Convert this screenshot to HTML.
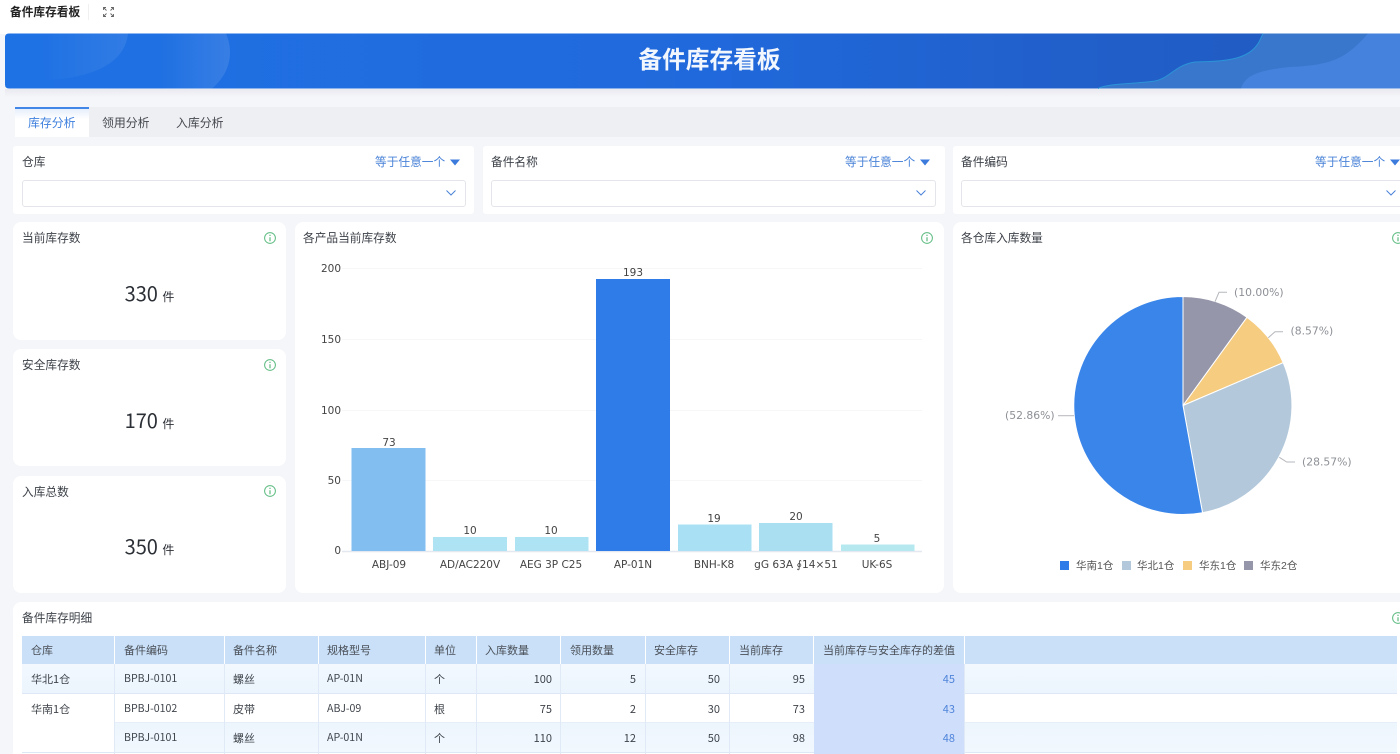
<!DOCTYPE html>
<html lang="zh">
<head>
<meta charset="utf-8">
<style>
*{box-sizing:border-box;margin:0;padding:0}
html,body{width:1400px;height:754px;overflow:hidden;background:#f5f6f9}
body{position:relative;font-family:"DejaVu Sans","Noto Sans CJK SC",sans-serif;font-size:11px;color:#333}
#p{position:absolute;left:0;top:0;width:1400px;height:754px;filter:blur(.35px)}
.a{position:absolute;white-space:nowrap}
.t{font-family:"Liberation Sans","Noto Sans CJK SC",sans-serif}
.card{position:absolute;background:#fff;border-radius:8px}
.ttl{position:absolute;font-family:"Liberation Sans","Noto Sans CJK SC",sans-serif;font-size:11.7px;line-height:16px;color:#3c4148;white-space:nowrap}
.sel{position:absolute;height:27px;background:#fff;border:1px solid #e3e5ea;border-radius:3px}
.eq{position:absolute;font-family:"Liberation Sans","Noto Sans CJK SC",sans-serif;font-size:11.7px;line-height:16px;color:#4a83d8;white-space:nowrap}
.val{position:absolute;left:0;width:273px;text-align:center;font-family:"Noto Sans CJK SC",sans-serif;font-size:20px;line-height:26px;color:#2b2f36;white-space:nowrap}
.val small{font-size:12px;margin-left:0}
.th,.td{position:absolute;font-family:"Noto Sans CJK SC",sans-serif;font-size:11px;white-space:nowrap;line-height:16px}
.th{color:#4a4f57;top:642px}
.td{color:#3f444b}
.c{font-size:10.6px}
.r{text-align:right}
</style>
</head>
<body>
<div id="p">
<!-- top bar -->
<div class="a" style="left:0;top:0;width:1400px;height:34px;background:#fff"></div>
<div class="a t" style="left:10px;top:5px;font-size:11.7px;line-height:16px;font-weight:bold;color:#222">备件库存看板</div>
<div class="a" style="left:88px;top:4px;width:1px;height:16px;background:#f0f0f0"></div>
<svg class="a" style="left:102px;top:6px" width="13" height="12" viewBox="0 0 13 12" fill="none" stroke="#666" stroke-width=".9">
<path d="M1.500 4V1.500H4M9 1.500H11.500V4M1.500 8V10.500H4M9 10.500H11.500V8M2 2L4.500 4.500M11 2L8.500 4.500M2 10L4.500 7.500M11 10L8.500 7.500"/>
</svg>

<!-- banner -->
<svg class="a" style="left:5px;top:33px" width="1395" height="56" viewBox="5 33 1395 56">
<defs>
<linearGradient id="bg" x1="0" x2="1" y1="0" y2="0">
<stop offset="0" stop-color="#1f72e4"/><stop offset=".5" stop-color="#2069dc"/><stop offset=".8" stop-color="#215ec8"/><stop offset="1" stop-color="#215ac0"/>
</linearGradient>
<linearGradient id="s1" x1="0" x2="1" y1="0" y2="0"><stop offset="0" stop-color="#fff" stop-opacity="0"/><stop offset="1" stop-color="#fff" stop-opacity=".08"/></linearGradient>
<linearGradient id="s2" x1="0" x2="1" y1="0" y2="0"><stop offset="0" stop-color="#fff" stop-opacity="0"/><stop offset="1" stop-color="#fff" stop-opacity=".11"/></linearGradient>
</defs>
<path d="M9 33.500H1400V88.500H9Q5 88.500 5 84.500V37.500Q5 33.500 9 33.500Z" fill="url(#bg)"/>
<path d="M40 33.500H128C125 62 95 78 45 80Z" fill="url(#s1)"/>
<path d="M160 33.500H226C235 55 228 75 212 88.500H160Z" fill="url(#s2)"/>
<path d="M1098 88.500C1110 83 1135 84 1155 81C1170 78 1175 65 1195 62C1220 61 1250 62 1260 40L1263 33.500H1400V88.500Z" fill="#3877cb"/>
<path d="M1098 88.500C1110 83 1135 84 1155 81C1170 78 1175 65 1195 62C1220 61 1250 62 1260 40L1263 33.500" fill="none" stroke="#2b94d8" stroke-width="1"/>
<path d="M1241 88.500C1245 75 1260 70 1290 67C1330 65 1345 60 1368 33.500H1400V88.500Z" fill="#4482dd"/>
</svg>
<div class="a t" style="left:5px;top:34px;width:1409px;height:55px;line-height:54px;text-align:center;font-size:23.7px;font-weight:bold;color:#f2f6fd">备件库存看板</div>
<div class="a" style="left:5px;top:89px;width:1395px;height:8px;background:linear-gradient(#e9e9f0,#f5f6f9)"></div>

<!-- tabs -->
<div class="a" style="left:15px;top:107px;width:1385px;height:30px;background:#eeeff3"></div>
<div class="a" style="left:15px;top:107px;width:74px;height:30px;background:linear-gradient(#e6effb 0,#fff 10px);border-top:2px solid #4287e8"></div>
<div class="a t" style="left:28px;top:115px;font-size:11.9px;line-height:16px;color:#3f80de">库存分析</div>
<div class="a t" style="left:102px;top:115px;font-size:11.9px;line-height:16px;color:#44484f">领用分析</div>
<div class="a t" style="left:176px;top:115px;font-size:11.9px;line-height:16px;color:#44484f">入库分析</div>

<!-- filters -->
<div class="card" style="left:13px;top:146px;width:461px;height:68px;border-radius:3px"></div>
<div class="ttl" style="left:22px;top:155px">仓库</div>
<div class="eq" style="left:375px;top:155px">等于任意一个</div>
<svg class="a" style="left:450px;top:159px" width="10" height="7"><path d="M0 .5H10L5 6.500Z" fill="#3c7bdc"/></svg>
<div class="sel" style="left:22px;top:180px;width:444px"></div>
<svg class="a" style="left:445px;top:189px" width="12" height="8" fill="none" stroke="#4a83d8"><path d="M1.500 1.500L6 6L10.500 1.500"/></svg>

<div class="card" style="left:483px;top:146px;width:462px;height:68px;border-radius:3px"></div>
<div class="ttl" style="left:491px;top:155px">备件名称</div>
<div class="eq" style="left:845px;top:155px">等于任意一个</div>
<svg class="a" style="left:920px;top:159px" width="10" height="7"><path d="M0 .5H10L5 6.500Z" fill="#3c7bdc"/></svg>
<div class="sel" style="left:491px;top:180px;width:445px"></div>
<svg class="a" style="left:915px;top:189px" width="12" height="8" fill="none" stroke="#4a83d8"><path d="M1.500 1.500L6 6L10.500 1.500"/></svg>

<div class="card" style="left:953px;top:146px;width:447px;height:68px;border-radius:3px 0 0 3px"></div>
<div class="ttl" style="left:961px;top:155px">备件编码</div>
<div class="eq" style="left:1315px;top:155px">等于任意一个</div>
<svg class="a" style="left:1390px;top:159px" width="10" height="7"><path d="M0 .5H10L5 6.500Z" fill="#3c7bdc"/></svg>
<div class="sel" style="left:961px;top:180px;width:445px"></div>
<svg class="a" style="left:1385px;top:189px" width="12" height="8" fill="none" stroke="#4a83d8"><path d="M1.500 1.500L6 6L10.500 1.500"/></svg>

<!-- KPI cards -->
<div class="card" style="left:13px;top:222px;width:273px;height:118px">
  <div class="val" style="top:58px">330 <small>件</small></div>
</div>
<div class="ttl" style="left:22px;top:231px">当前库存数</div>
<div class="card" style="left:13px;top:349px;width:273px;height:117px">
  <div class="val" style="top:58px">170 <small>件</small></div>
</div>
<div class="ttl" style="left:22px;top:358px">安全库存数</div>
<div class="card" style="left:13px;top:476px;width:273px;height:117px">
  <div class="val" style="top:57px">350 <small>件</small></div>
</div>
<div class="ttl" style="left:22px;top:485px">入库总数</div>

<svg width="0" height="0" style="position:absolute">
<defs><g id="inf" fill="none" stroke="#5dbb80"><circle cx="6" cy="6" r="5.400"/><path d="M6 5.200V9.200M6 2.800V4" stroke-width="1.200"/></g></defs>
</svg>
<svg class="a" style="left:264px;top:232px" width="12" height="12"><use href="#inf"/></svg>
<svg class="a" style="left:264px;top:359px" width="12" height="12"><use href="#inf"/></svg>
<svg class="a" style="left:264px;top:485px" width="12" height="12"><use href="#inf"/></svg>

<!-- bar chart -->
<div class="card" style="left:295px;top:222px;width:649px;height:371px"></div>
<div class="ttl" style="left:303px;top:231px">各产品当前库存数</div>
<svg class="a" style="left:921px;top:232px" width="12" height="12"><use href="#inf"/></svg>
<svg class="a" style="left:295px;top:255px" width="649" height="330" viewBox="295 255 649 330" font-family="DejaVu Sans,sans-serif" font-size="10.500" fill="#444">
<g stroke="#f6f7f9" stroke-width="1"><path d="M342 268.500H922M342 339.500H922M342 410.500H922M342 480.500H922"/></g>
<path d="M342 551.500H922" stroke="#e4e8f0" stroke-width="1.500"/>
<g text-anchor="end" fill="#444">
<text x="341" y="272">200</text><text x="341" y="343">150</text><text x="341" y="414">100</text><text x="341" y="484">50</text><text x="341" y="554">0</text>
</g>
<rect x="351.500" y="448" width="74" height="103" fill="#82bef0"/>
<rect x="433" y="537" width="74" height="14" fill="#aee3f3"/>
<rect x="515" y="537" width="73.500" height="14" fill="#aee3f3"/>
<rect x="596" y="279" width="74" height="272" fill="#2f7be8"/>
<rect x="678" y="524.500" width="73.500" height="26.500" fill="#aae0f3"/>
<rect x="759" y="523" width="73.500" height="28" fill="#aadff2"/>
<rect x="841" y="544.500" width="73.500" height="6.500" fill="#b5e8ef"/>
<g text-anchor="middle" fill="#444">
<text x="389" y="446">73</text><text x="470" y="534">10</text><text x="551" y="534">10</text><text x="633" y="276">193</text><text x="714" y="522">19</text><text x="796" y="520">20</text><text x="877" y="542">5</text>
<text x="389" y="568">ABJ-09</text><text x="470" y="568">AD/AC220V</text><text x="551" y="568">AEG 3P C25</text><text x="633" y="568">AP-01N</text><text x="714" y="568">BNH-K8</text>
<text x="796" y="568" font-size="10.600">gG 63A ∮14×51</text><text x="877" y="568">UK-6S</text>
</g>
</svg>

<!-- pie -->
<div class="card" style="left:953px;top:222px;width:447px;height:371px;border-radius:8px 0 0 8px"></div>
<div class="ttl" style="left:961px;top:231px">各仓库入库数量</div>
<svg class="a" style="left:1392px;top:232px" width="12" height="12"><use href="#inf"/></svg>
<svg class="a" style="left:1000px;top:270px" width="400" height="320" viewBox="1000 270 400 320" font-family="DejaVu Sans,sans-serif" font-size="10.800" fill="#8d9096">
<g stroke="#fff" stroke-width="1">
<path d="M1183 405.500V296.500A109 109 0 0 1 1247 317.300Z" fill="#9696aa"/>
<path d="M1183 405.500L1247 317.300A109 109 0 0 1 1283.200 362.700Z" fill="#f6cc80"/>
<path d="M1183 405.500L1283.200 362.700A109 109 0 0 1 1202.500 512.700Z" fill="#b3c9db"/>
<path d="M1183 405.500L1202.500 512.700A109 109 0 1 1 1183 296.500Z" fill="#3a85ea"/>
</g>
<g fill="none" stroke="#b5b7bc">
<path d="M1215 301.700L1219 292.300H1227"/><path d="M1268.300 337.700L1275 331.700H1283"/><path d="M1279.300 457.300L1286.700 462H1295"/><path d="M1074 415.700H1058"/>
</g>
<text x="1234" y="296">(10.00%)</text>
<text x="1290.500" y="334.500">(8.57%)</text>
<text x="1302" y="465.500">(28.57%)</text>
<text x="1005" y="419">(52.86%)</text>
<g font-family="Liberation Sans,Noto Sans CJK SC,sans-serif" font-size="10.500" fill="#555">
<rect x="1060" y="561" width="9" height="9" fill="#2f7be8"/><text x="1076" y="569">华南1仓</text>
<rect x="1122" y="561" width="9" height="9" fill="#b3c9db"/><text x="1137" y="569">华北1仓</text>
<rect x="1183" y="561" width="9" height="9" fill="#f6cc80"/><text x="1199" y="569">华东1仓</text>
<rect x="1244" y="561" width="9" height="9" fill="#9696aa"/><text x="1260" y="569">华东2仓</text>
</g>
</svg>

<!-- table card -->
<div class="card" style="left:13px;top:602px;width:1387px;height:152px;border-radius:8px 0 0 0"></div>
<div class="ttl" style="left:22px;top:611px">备件库存明细</div>
<svg class="a" style="left:1392px;top:612px" width="12" height="12"><use href="#inf"/></svg>

<!-- table header -->
<div class="a" style="left:22px;top:636px;width:1375px;height:28px;background:#c9e0f8"></div>
<!-- rows -->
<div class="a" style="left:22px;top:664px;width:1375px;height:29px;background:linear-gradient(#f2f8fe,#ecf5fd)"></div>
<div class="a" style="left:22px;top:694px;width:1375px;height:28px;background:#fff"></div>
<div class="a" style="left:115px;top:723px;width:1282px;height:29px;background:linear-gradient(#eef6fd,#f1f8fe)"></div>
<div class="a" style="left:22px;top:693px;width:1375px;height:1px;background:#dde7f5"></div>
<div class="a" style="left:115px;top:722px;width:1282px;height:1px;background:#e6eef9"></div>
<div class="a" style="left:22px;top:752px;width:1375px;height:1px;background:#dde7f5"></div>
<div class="a" style="left:814px;top:664px;width:151px;height:90px;background:#cfdffb"></div>
<!-- column separators -->
<svg class="a" style="left:0;top:636px" width="1400" height="118" fill="none">
<path d="M114.500 0V28M224.500 0V28M318.500 0V28M425.500 0V28M476.500 0V28M560.500 0V28M645.500 0V28M729.500 0V28M813.500 0V28M964.500 0V28" stroke="#fff"/>
<path d="M114.500 28V118M224.500 28V118M318.500 28V118M425.500 28V118M476.500 28V118M560.500 28V118M645.500 28V118M729.500 28V118M964.500 28V118" stroke="#e0e9f6"/>
</svg>

<div class="th" style="left:31px">仓库</div>
<div class="th" style="left:124px">备件编码</div>
<div class="th" style="left:233px">备件名称</div>
<div class="th" style="left:327px">规格型号</div>
<div class="th" style="left:434px">单位</div>
<div class="th" style="left:485px">入库数量</div>
<div class="th" style="left:570px">领用数量</div>
<div class="th" style="left:654px">安全库存</div>
<div class="th" style="left:739px">当前库存</div>
<div class="th" style="left:823px">当前库存与安全库存的差值</div>

<div class="td" style="left:31px;top:671px">华北1仓</div>
<div class="td c" style="left:124px;top:671px">BPBJ-0101</div>
<div class="td" style="left:233px;top:671px">螺丝</div>
<div class="td c" style="left:327px;top:671px">AP-01N</div>
<div class="td" style="left:434px;top:671px">个</div>
<div class="td r" style="left:477px;width:75px;top:671px">100</div>
<div class="td r" style="left:561px;width:75px;top:671px">5</div>
<div class="td r" style="left:646px;width:74px;top:671px">50</div>
<div class="td r" style="left:730px;width:75px;top:671px">95</div>
<div class="td r" style="left:814px;width:141px;top:671px;color:#4f83da">45</div>

<div class="td" style="left:31px;top:701px">华南1仓</div>
<div class="td c" style="left:124px;top:701px">BPBJ-0102</div>
<div class="td" style="left:233px;top:701px">皮带</div>
<div class="td c" style="left:327px;top:701px">ABJ-09</div>
<div class="td" style="left:434px;top:701px">根</div>
<div class="td r" style="left:477px;width:75px;top:701px">75</div>
<div class="td r" style="left:561px;width:75px;top:701px">2</div>
<div class="td r" style="left:646px;width:74px;top:701px">30</div>
<div class="td r" style="left:730px;width:75px;top:701px">73</div>
<div class="td r" style="left:814px;width:141px;top:701px;color:#4f83da">43</div>

<div class="td c" style="left:124px;top:730px">BPBJ-0101</div>
<div class="td" style="left:233px;top:730px">螺丝</div>
<div class="td c" style="left:327px;top:730px">AP-01N</div>
<div class="td" style="left:434px;top:730px">个</div>
<div class="td r" style="left:477px;width:75px;top:730px">110</div>
<div class="td r" style="left:561px;width:75px;top:730px">12</div>
<div class="td r" style="left:646px;width:74px;top:730px">50</div>
<div class="td r" style="left:730px;width:75px;top:730px">98</div>
<div class="td r" style="left:814px;width:141px;top:730px;color:#4f83da">48</div>
</div>
</body>
</html>
